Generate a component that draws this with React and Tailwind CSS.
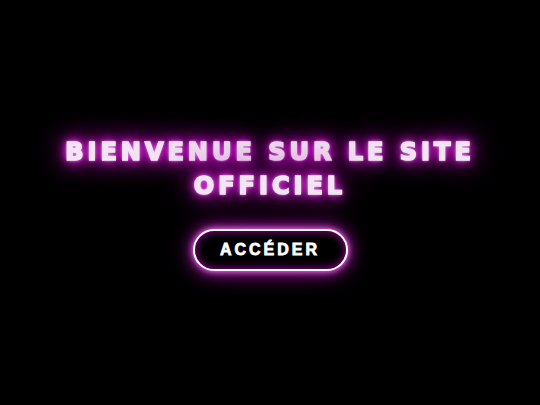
export default function App() {
  return (
    <div className="w-full h-screen bg-black flex flex-col items-center justify-center">
      <h1 className="text-center text-[24px] leading-[34px] font-black uppercase tracking-[4px] text-[#f3e4f3] font-['DejaVu_Sans',sans-serif] [-webkit-text-stroke:1.6px_#f3e4f3] blur-[0.6px] [text-shadow:0_0_3px_#fff,0_0_8px_#ff4dff,0_0_14px_#ff00ff,0_0_24px_#ee00ee,0_0_40px_#aa00aa,0_0_70px_#770077]">
        Bienvenue sur le site
        <br />
        officiel
      </h1>
      <button className="mt-[26px] w-[155px] h-[42px] rounded-full border-2 border-white bg-black text-white text-[16px] font-black tracking-[3px] font-['Liberation_Sans',sans-serif] [-webkit-text-stroke:0.8px_#fff] shadow-[0_0_6px_#ff88ff,0_0_16px_#bb22bb,0_0_28px_#660066,inset_0_0_8px_#aa00aa]">
        ACCÉDER
      </button>
    </div>
  );
}
